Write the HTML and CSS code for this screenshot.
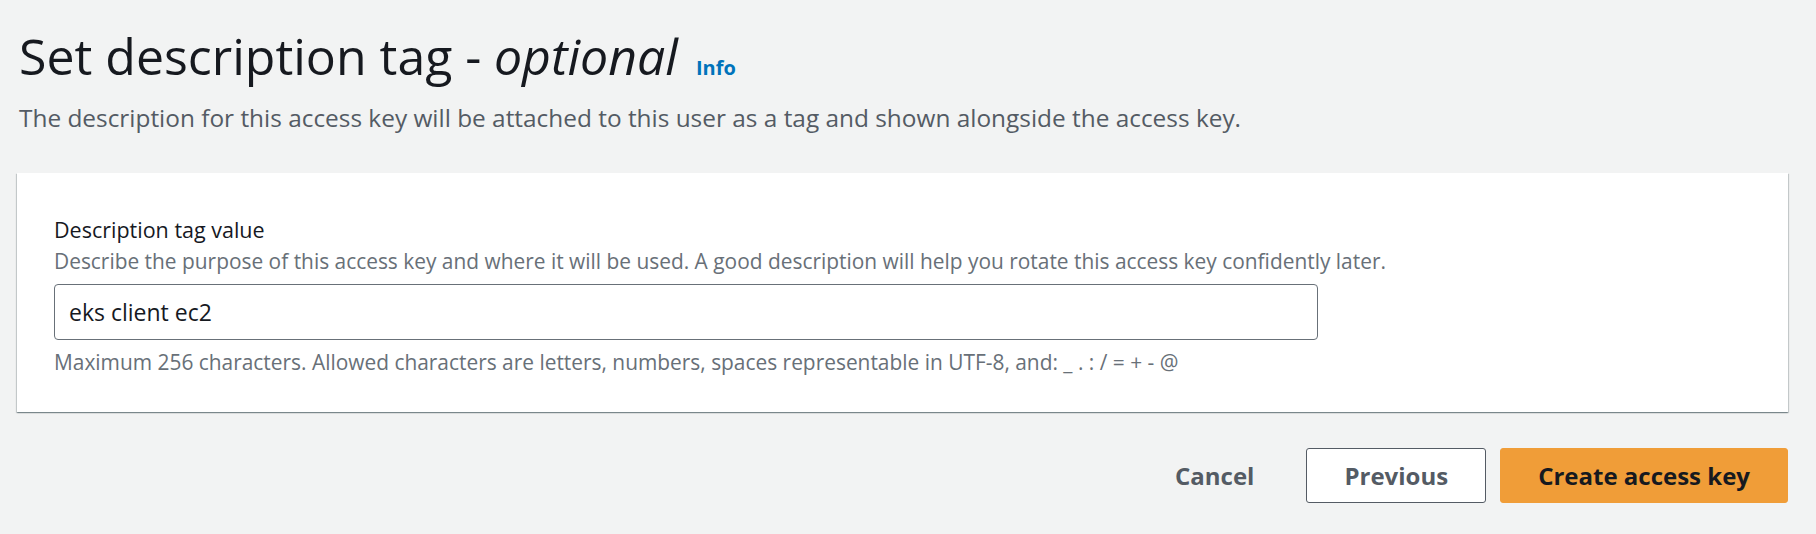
FILE: index.html
```html
<!DOCTYPE html>
<html lang="en">
<head>
<meta charset="utf-8">
<title>Set description tag</title>
<link rel="stylesheet" href="styles.css">
</head>
<body>
<div class="page">
  <header class="header">
    <h1 class="title">Set description tag - <i class="optional">optional</i><a class="info" href="#">Info</a></h1>
    <p class="desc">The description for this access key will be attached to this user as a tag and shown alongside the access key.</p>
  </header>
  <section class="card">
    <div class="field">
      <label class="label" for="tag">Description tag value</label>
      <div class="hint">Describe the purpose of this access key and where it will be used. A good description will help you rotate this access key confidently later.</div>
      <input class="input" id="tag" type="text" value="eks client ec2">
      <div class="constraint">Maximum 256 characters. Allowed characters are letters, numbers, spaces representable in UTF-8, and: _ . : / = + - @</div>
    </div>
  </section>
  <div class="actions">
    <button class="btn btn-link" type="button">Cancel</button>
    <button class="btn btn-normal" type="button">Previous</button>
    <button class="btn btn-primary" type="button">Create access key</button>
  </div>
</div>
</body>
</html>
```

FILE: styles.css
```css
html, body {
  margin: 0;
  padding: 0;
  background: #f2f3f3;
}

body {
  font-family: "Open Sans", "Noto Sans", sans-serif;
  color: #16191f;
}

.page {
  padding: 27px 28px 0 17px;
}

.header {
  padding-left: 2px;
}

.title {
  margin: 0;
  font-size: 50px;
  line-height: 58px;
  font-weight: 400;
  color: #16191f;
  display: flex;
  align-items: baseline;
}

.optional {
  font-style: italic;
  margin-left: 0.25em;
}

.info {
  margin-left: 18px;
  font-size: 20px;
  font-weight: 700;
  color: #0073bb;
  text-decoration: none;
}

.desc {
  margin: 6px 0 0;
  font-size: 24.4px;
  line-height: 30px;
  color: #545b64;
}

.card {
  margin-top: 40px;
  background: #ffffff;
  padding: 43px 37px 37px;
  box-shadow: 0 1px 1px 0 rgba(0, 28, 36, 0.3), 1px 1px 1px 0 rgba(0, 28, 36, 0.15), -1px 1px 1px 0 rgba(0, 28, 36, 0.15);
}

.field {
  display: flex;
  flex-direction: column;
  align-items: flex-start;
}

.label {
  font-size: 21.5px;
  line-height: 28px;
  color: #16191f;
}

.hint {
  margin-top: 4px;
  font-size: 20.9px;
  line-height: 26px;
  color: #687078;
}

.input {
  margin-top: 10px;
  box-sizing: border-box;
  width: 1264px;
  height: 56px;
  padding: 0 14px;
  border: 1.5px solid #687078;
  border-radius: 4px;
  background: #ffffff;
  font-family: inherit;
  font-size: 23px;
  color: #16191f;
  outline: none;
}

.constraint {
  margin-top: 9px;
  font-size: 20.9px;
  line-height: 26px;
  color: #687078;
}

.actions {
  display: flex;
  justify-content: flex-end;
  gap: 14px;
  margin-top: 36px;
}

.btn {
  box-sizing: border-box;
  height: 55px;
  padding: 0 37px;
  border-radius: 3px;
  font-family: inherit;
  font-size: 24px;
  font-weight: 700;
  cursor: pointer;
}

.btn-link {
  background: transparent;
  border: 1px solid transparent;
  color: #545b64;
}

.btn-normal {
  background: #ffffff;
  border: 1px solid #545b64;
  color: #545b64;
}

.btn-primary {
  background: #f09d38;
  border: 1px solid #f09d38;
  color: #16191f;
}
```
